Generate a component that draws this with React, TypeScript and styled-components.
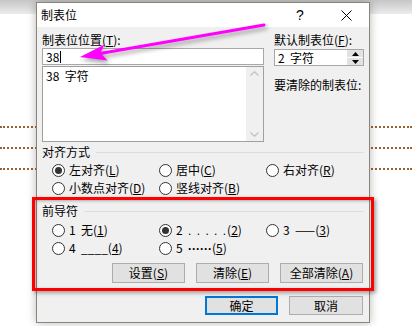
import styled, { createGlobalStyle } from "styled-components";

const GlobalStyle = createGlobalStyle`
    html, body {
        margin: 0;
        padding: 0;
        background: #fff;
    }
    body {
        font-family: "Noto Sans CJK SC", "Noto Sans", sans-serif;
        font-size: 12px;
        color: #000;
    }
`

const Desktop = styled.div`
    position: relative;
    width: 412px;
    height: 326px;
    overflow: hidden;
    background: #fff;
`

const Document = styled.div`
    display: flex;
    flex-direction: column;
`

const TopBand = styled.div`
    height: 14px;
    background: linear-gradient(#c6c6c6, #ececec);
`

const Lines = styled.div`
    display: flex;
    flex-direction: column;
    gap: 19px;
    padding-top: 112px;
`

const DottedLine = styled.div`
    border-top: 2px dotted #9a6232;
`

const Dialog = styled.div`
    position: absolute;
    left: 36px;
    top: 2px;
    width: 334px;
    height: 321px;
    box-sizing: border-box;
    border: 1px solid #8c8478;
    background: #f0f0f0;
    box-shadow: 0 0 9px rgba(0, 0, 0, 0.28);
    display: flex;
    flex-direction: column;
`

const TitleBar = styled.div`
    height: 24px;
    background: #fff;
    display: flex;
    align-items: center;
    padding-left: 4px;
`

const Title = styled.span`
    flex: 1;
    font-size: 12px;
    line-height: 16px;
`

const TitleButton = styled.span`
    width: 46px;
    height: 24px;
    display: flex;
    align-items: center;
    justify-content: center;
    font-family: "Liberation Sans", sans-serif;
    font-size: 14px;
`

const Body = styled.div`
    display: flex;
    flex-direction: column;
    padding: 5px 5px 0 5px;
`

const TopRow = styled.div`
    display: flex;
    gap: 10px;
`

const Column = styled.div<{ $width: number }>`
    width: ${p => p.$width}px;
    display: flex;
    flex-direction: column;
`

const Label = styled.div<{ $gap?: number }>`
    line-height: 16px;
    height: 16px;
    margin-top: ${p => p.$gap ?? 0}px;
    white-space: pre;
`

const Key = styled.span`
    text-decoration: underline;
`

const TextBox = styled.div`
    height: 17px;
    box-sizing: border-box;
    border: 1px solid #a8a8a8;
    background: #fff;
    display: flex;
    align-items: center;
    padding-left: 3px;
    line-height: 14px;
    white-space: pre;
`

const Caret = styled.span`
    display: inline-block;
    width: 1px;
    height: 12px;
    background: #000;
    margin-left: 1px;
`

const ListBox = styled.div`
    margin-top: 1px;
    height: 76px;
    box-sizing: border-box;
    border: 1px solid #a0a0a0;
    background: #fff;
    display: flex;
`

const ListItems = styled.div`
    flex: 1;
    padding: 1px 3px;
    line-height: 15px;
    white-space: pre;
`

const ScrollBar = styled.div`
    width: 17px;
    background: #f0f0f0;
    display: flex;
    flex-direction: column;
    justify-content: space-between;
    align-items: center;
    padding: 4px 0;
`

const SpinBox = styled(TextBox)`
    margin-top: 1px;
    padding-right: 0;
`

const SpinText = styled.span`
    flex: 1;
`

const SpinButtons = styled.div`
    width: 16px;
    height: 15px;
    display: flex;
    flex-direction: column;
    gap: 1px;
`

const SpinButton = styled.div`
    flex: 1;
    background: #e2e2e2;
    display: flex;
    align-items: center;
    justify-content: center;
`

const GroupHeader = styled.div<{ $gap: number }>`
    margin-top: ${p => p.$gap}px;
    height: 16px;
    display: flex;
    align-items: center;
    gap: 6px;
    line-height: 16px;

    &::after {
        content: "";
        flex: 1;
        border-top: 1px solid #dcdcdc;
    }
`

const RadioGrid = styled.div<{ $gap: number }>`
    margin-top: ${p => p.$gap}px;
    padding-left: 10px;
    display: grid;
    grid-template-columns: 107px 107px auto;
    grid-auto-rows: 18px;
`

const RadioItem = styled.label`
    display: flex;
    align-items: center;
    gap: 4px;
    white-space: pre;
    line-height: 16px;
`

const RadioCircle = styled.span<{ $checked?: boolean }>`
    width: 13px;
    height: 13px;
    box-sizing: border-box;
    border-radius: 50%;
    border: 1px solid #333;
    background: #fff;
    display: flex;
    align-items: center;
    justify-content: center;

    &::after {
        content: "";
        width: 7px;
        height: 7px;
        border-radius: 50%;
        background: ${p => (p.$checked ? "#333" : "transparent")};
    }
`

const Dots = styled.span<{ $dense?: boolean }>`
    font-family: "Liberation Sans", sans-serif;
    letter-spacing: ${p => (p.$dense ? 0 : 1)}px;
    font-weight: ${p => (p.$dense ? 700 : 400)};
`

const ButtonRow = styled.div<{ $gap: number }>`
    margin-top: ${p => p.$gap}px;
    display: flex;
    justify-content: flex-end;
    gap: 11px;
    padding-right: 1px;
`

const Button = styled.button<{ $width: number; $height?: number; $default?: boolean }>`
    width: ${p => p.$width}px;
    height: ${p => p.$height ?? 20}px;
    box-sizing: border-box;
    margin: 0;
    padding: 0;
    font-family: inherit;
    font-size: 12px;
    color: #000;
    background: #e1e1e1;
    border: ${p => (p.$default ? "2px solid #0078d7" : "1px solid #adadad")};
    line-height: 14px;
`

const Highlight = styled.div`
    position: absolute;
    left: 32px;
    top: 197px;
    width: 342px;
    height: 94px;
    box-sizing: border-box;
    border: 3.5px solid #ff0000;
    box-shadow: 2px 2px 4px rgba(0, 0, 0, 0.35), inset 1px 1px 3px rgba(0, 0, 0, 0.3);
`

const ArrowLayer = styled.svg`
    position: absolute;
    left: 0;
    top: 0;
    width: 412px;
    height: 326px;
    pointer-events: none;
    filter: drop-shadow(2px 3px 2px rgba(0, 0, 0, 0.35));
`

const Radio = ({ checked, children }: { checked?: boolean; children: React.ReactNode }) => (
    <RadioItem>
        <RadioCircle $checked={checked} />
        <span>{children}</span>
    </RadioItem>
)

const App = () => {
    return (
        <Desktop>
            <GlobalStyle />
            <Document>
                <TopBand />
                <Lines>
                    <DottedLine />
                    <DottedLine />
                    <DottedLine />
                </Lines>
            </Document>

            <Dialog>
                <TitleBar>
                    <Title>制表位</Title>
                    <TitleButton>?</TitleButton>
                    <TitleButton>
                        <svg width="11" height="11" viewBox="0 0 11 11">
                            <path d="M0.5 0.5 L10.5 10.5 M10.5 0.5 L0.5 10.5" stroke="#000" strokeWidth="1" />
                        </svg>
                    </TitleButton>
                </TitleBar>

                <Body>
                    <TopRow>
                        <Column $width={222}>
                            <Label>制表位位置(<Key>T</Key>):</Label>
                            <TextBox>38<Caret /></TextBox>
                            <ListBox>
                                <ListItems>{"38  字符"}</ListItems>
                                <ScrollBar>
                                    <svg width="9" height="5" viewBox="0 0 9 5">
                                        <path d="M0.5 4.5 L4.5 0.8 L8.5 4.5" fill="none" stroke="#c4c4c4" strokeWidth="1.4" />
                                    </svg>
                                    <svg width="9" height="5" viewBox="0 0 9 5">
                                        <path d="M0.5 0.5 L4.5 4.2 L8.5 0.5" fill="none" stroke="#c4c4c4" strokeWidth="1.4" />
                                    </svg>
                                </ScrollBar>
                            </ListBox>
                        </Column>
                        <Column $width={90}>
                            <Label>默认制表位(<Key>F</Key>):</Label>
                            <SpinBox>
                                <SpinText>{"2  字符"}</SpinText>
                                <SpinButtons>
                                    <SpinButton>
                                        <svg width="7" height="4" viewBox="0 0 7 4"><path d="M0 4 L3.5 0 L7 4 Z" fill="#000" /></svg>
                                    </SpinButton>
                                    <SpinButton>
                                        <svg width="7" height="4" viewBox="0 0 7 4"><path d="M0 0 L3.5 4 L7 0 Z" fill="#000" /></svg>
                                    </SpinButton>
                                </SpinButtons>
                            </SpinBox>
                            <Label $gap={11}>要清除的制表位:</Label>
                        </Column>
                    </TopRow>

                    <GroupHeader $gap={2}>对齐方式</GroupHeader>
                    <RadioGrid $gap={1}>
                        <Radio checked>左对齐(<Key>L</Key>)</Radio>
                        <Radio>居中(<Key>C</Key>)</Radio>
                        <Radio>右对齐(<Key>R</Key>)</Radio>
                        <Radio>小数点对齐(<Key>D</Key>)</Radio>
                        <Radio>竖线对齐(<Key>B</Key>)</Radio>
                    </RadioGrid>

                    <GroupHeader $gap={6}>前导符</GroupHeader>
                    <RadioGrid $gap={2}>
                        <Radio>{"1  无("}<Key>1</Key>)</Radio>
                        <Radio checked>{"2  "}<Dots>. . . . .</Dots>(<Key>2</Key>)</Radio>
                        <Radio>{"3  ——("}<Key>3</Key>)</Radio>
                        <Radio>{"4  ____("}<Key>4</Key>)</Radio>
                        <Radio>{"5  "}<Dots $dense>······</Dots>(<Key>5</Key>)</Radio>
                    </RadioGrid>

                    <ButtonRow $gap={6}>
                        <Button $width={73}>设置(<Key>S</Key>)</Button>
                        <Button $width={73}>清除(<Key>E</Key>)</Button>
                        <Button $width={83}>全部清除(<Key>A</Key>)</Button>
                    </ButtonRow>

                    <ButtonRow $gap={13}>
                        <Button $width={73} $height={19} $default>确定</Button>
                        <Button $width={74} $height={19}>取消</Button>
                    </ButtonRow>
                </Body>
            </Dialog>

            <Highlight />

            <ArrowLayer viewBox="0 0 412 326">
                <line x1="264" y1="25" x2="100" y2="53.5" stroke="#ff00ff" strokeWidth="3" strokeLinecap="round" />
                <path d="M80 57 L104.5 44.5 L100.5 53 L107.5 60.5 Z" fill="#ff00ff" />
            </ArrowLayer>
        </Desktop>
    )
}

export default App;
